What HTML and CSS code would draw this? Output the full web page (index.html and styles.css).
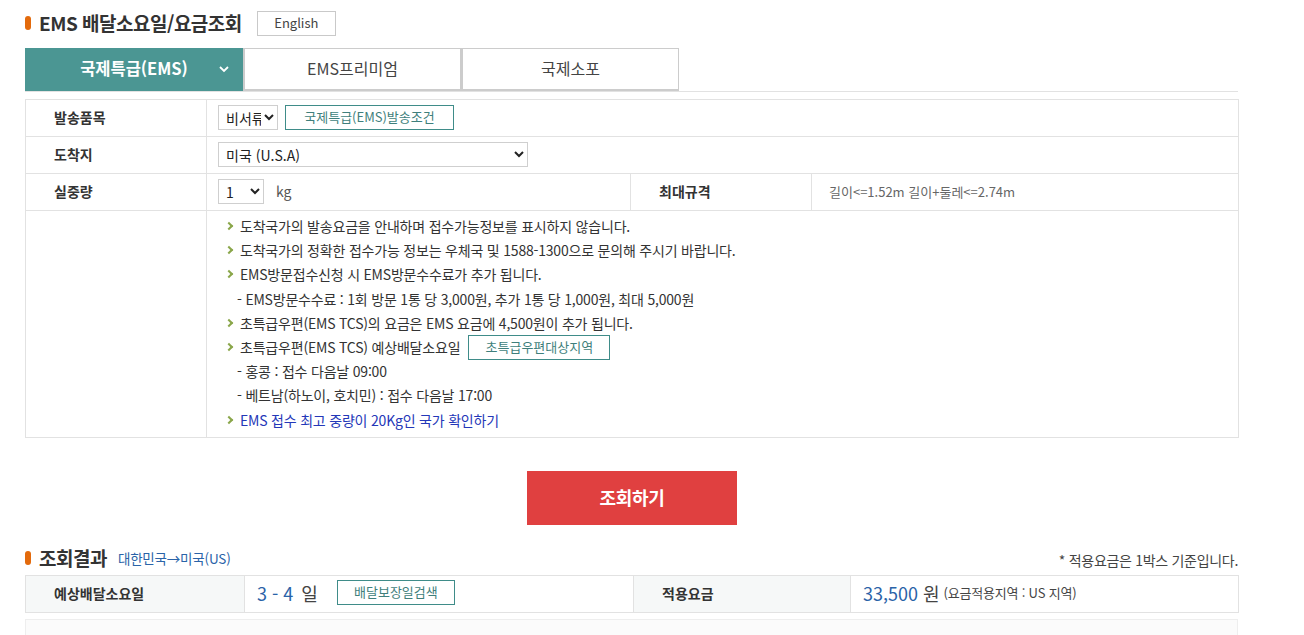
FILE: index.html
```html
<!DOCTYPE html>
<html lang="ko">
<head>
<meta charset="utf-8">
<title>EMS 배달소요일/요금조회</title>
<link rel="stylesheet" href="styles.css">
</head>
<body>
<div class="wrap">
  <div class="head">
    <h2 class="title"><span class="dot"></span>EMS 배달소요일/요금조회</h2>
    <button class="btn-eng">English</button>
  </div>

  <div class="tabs">
    <div class="tab on">국제특급(EMS)
      <svg class="chev" width="12" height="8" viewBox="0 0 12 8"><path d="M2 2 L6 6 L10 2" fill="none" stroke="#fff" stroke-width="1.8"/></svg>
    </div>
    <div class="tab">EMS프리미엄</div>
    <div class="tab">국제소포</div>
  </div>

  <table class="form">
    <colgroup><col class="c1"><col class="c2"><col class="c3"><col class="c4"></colgroup>
    <tr>
      <th>발송품목</th>
      <td colspan="3"><div class="cell">
        <select class="sel sel-kind"><option>비서류</option></select>
        <button class="btn-line">국제특급(EMS)발송조건</button>
      </div></td>
    </tr>
    <tr>
      <th>도착지</th>
      <td colspan="3"><div class="cell">
        <select class="sel sel-dest"><option>미국 (U.S.A)</option></select>
      </div></td>
    </tr>
    <tr>
      <th>실중량</th>
      <td><div class="cell">
        <select class="sel sel-wt"><option>1</option></select>
        <span class="unit">kg</span>
      </div></td>
      <th>최대규격</th>
      <td class="spec">길이&lt;=1.52m 길이+둘레&lt;=2.74m</td>
    </tr>
    <tr>
      <th></th>
      <td colspan="3" class="notes">
        <ul>
          <li class="b">도착국가의 발송요금을 안내하며 접수가능정보를 표시하지 않습니다.</li>
          <li class="b">도착국가의 정확한 접수가능 정보는 우체국 및 1588-1300으로 문의해 주시기 바랍니다.</li>
          <li class="b">EMS방문접수신청 시 EMS방문수수료가 추가 됩니다.</li>
          <li class="d">- EMS방문수수료 : 1회 방문 1통 당 3,000원, 추가 1통 당 1,000원, 최대 5,000원</li>
          <li class="b">초특급우편(EMS TCS)의 요금은 EMS 요금에 4,500원이 추가 됩니다.</li>
          <li class="b">초특급우편(EMS TCS) 예상배달소요일 <button class="btn-line btn-tcs">초특급우편대상지역</button></li>
          <li class="d">- 홍콩 : 접수 다음날 09:00</li>
          <li class="d">- 베트남(하노이, 호치민) : 접수 다음날 17:00</li>
          <li class="b link">EMS 접수 최고 중량이 20Kg인 국가 확인하기</li>
        </ul>
      </td>
    </tr>
  </table>

  <div class="search"><button class="btn-search">조회하기</button></div>

  <div class="rhead">
    <h3 class="title sub"><span class="dot"></span>조회결과<span class="route">대한민국→미국(US)</span></h3>
    <span class="note">* 적용요금은 1박스 기준입니다.</span>
  </div>

  <table class="result">
    <colgroup><col class="r1"><col class="r2"><col class="r3"><col class="r4"></colgroup>
    <tr>
      <th>예상배달소요일</th>
      <td><div class="cell"><span class="big">3 - 4</span><span class="big unit-day">일</span><button class="btn-line btn-guar">배달보장일검색</button></div></td>
      <th>적용요금</th>
      <td><div class="cell"><span class="big">33,500</span><span class="big unit-won">원</span><span class="area">(요금적용지역 : US 지역)</span></div></td>
    </tr>
  </table>
  <div class="more"></div>
</div>
</body>
</html>
```

FILE: styles.css
```css
* { box-sizing: border-box; }
html, body { margin: 0; padding: 0; background: #fff; }
body {
  font-family: "Noto Sans CJK KR", "Noto Sans", sans-serif;
  color: #333;
  font-size: 14px;
}
.wrap { width: 1213px; margin-left: 25px; }

.head { display: flex; align-items: center; height: 48px; padding-bottom: 2px; }
.title {
  margin: 0; display: flex; align-items: center;
  font-size: 19px; font-weight: 700; color: #333; letter-spacing: -0.5px; line-height: 24px;
}
.dot {
  width: 6px; height: 14px; border-radius: 3px; background: #e36a0c;
  margin-right: 8px; display: inline-block;
}
.btn-eng {
  margin-left: 15px; width: 79px; height: 25px; border: 1px solid #c9c9c9; background: #fff;
  font-family: inherit; font-size: 13px; color: #444; padding: 0 0 1px; line-height: 22px;
}

.tabs { display: flex; height: 44px; border-bottom: 1px solid #e2e2e2; }
.tab {
  width: 218px; height: 43px; display: flex; align-items: center; justify-content: center;
  font-size: 16px; color: #444; border: 1px solid #ccc; border-bottom: 2px solid #ccc; background: #fff;
  padding-bottom: 3px;
}
.tab + .tab { border-left: 2px solid #ccc; }
.tab.on {
  background: #4b9693; color: #fff; font-weight: 700; border: none; position: relative;
  letter-spacing: 0; font-size: 16.5px;
}
.tab.on .chev { position: absolute; right: 13px; top: 17px; }

.form, .result { width: 100%; border-collapse: collapse; table-layout: fixed; }
.form { margin-top: 7px; border-top: 1px solid #a4b8b7; }
.form col.c1 { width: 181px; }
.form col.c2 { width: 424px; }
.form col.c3 { width: 181px; }
.form col.c4 { width: 427px; }
.form th, .form td, .result th, .result td {
  border: 1px solid #e2e2e2; height: 37px; padding: 0 0 2px; vertical-align: middle;
}
.form th, .result th {
  text-align: left; padding-left: 28px; font-size: 14px; font-weight: 700; color: #333; background: #fff;
}
.form td .cell { margin-top: 1px; }
.cell { display: flex; align-items: center; padding-left: 11px; }
.sel {
  height: 25px; border: 1px solid #cfcfcf; background: #fff; font-family: inherit;
  font-size: 14px; color: #222; padding: 0 0 0 3px; border-radius: 0;
}
.sel-kind { width: 60px; }
.sel-dest { width: 310px; }
.sel-wt { width: 46px; }
.unit { margin-left: 12px; color: #555; font-size: 14px; margin-bottom: 2px; }
.btn-line {
  height: 25px; border: 1px solid #3f8c89; background: #fff; color: #3f7f7c;
  font-family: inherit; font-size: 13px; padding: 0 0 1px; line-height: 22px;
}
.sel-kind + .btn-line { margin-left: 7px; width: 169px; }
.spec { padding-left: 17px !important; font-size: 13px; color: #666; }

.notes { height: 225px !important; padding: 3px 0 5px 18px !important; vertical-align: top !important; }
.notes ul { list-style: none; margin: 0; padding: 0; }
.notes li { line-height: 24.2px; font-size: 14px; color: #333; letter-spacing: -0.2px; display: flex; align-items: center; height: 24.2px; }
.notes li.b::before {
  content: ""; width: 4px; height: 4px; border-right: 2px solid #8aa64a; border-bottom: 2px solid #8aa64a;
  transform: rotate(-45deg); margin: 0 8px 0 1px; flex: none;
}
.notes li.d { padding-left: 12px; }
.notes li.link { color: #2437b8; }
.btn-tcs { width: 142px; margin-left: 8px; }

.search { display: flex; justify-content: center; margin-top: 33px; padding-left: 1px; }
.btn-search {
  width: 210px; height: 54px; border: none; background: #e04040; color: #fff;
  font-family: inherit; font-size: 18px; font-weight: 700; padding: 0 0 2px; letter-spacing: -0.3px;
}

.rhead { display: flex; align-items: flex-end; justify-content: space-between; margin-top: 21px; height: 29px; padding-bottom: 5px; }
.title.sub { font-size: 19px; }
.route { font-size: 13.5px; font-weight: 400; color: #2a63a8; margin-left: 11px; letter-spacing: -0.2px; }
.note { font-size: 14px; color: #444; padding-bottom: 0; letter-spacing: -0.3px; }

.result { border-top: 1px solid #a4b8b7; }
.result col.r1 { width: 219px; }
.result col.r2 { width: 389px; }
.result col.r3 { width: 217px; }
.result col.r4 { width: 388px; }
.result th { background: #f6f8f8; }
.big { font-size: 18px; color: #2a63a8; }
.result td .cell { padding-left: 12px; }
.unit-day { margin-left: 8px; color: #444; }
.btn-guar { width: 118px; margin-left: 19px; }
.unit-won { margin-left: 5px; color: #444; }
.area { font-size: 13px; color: #444; margin-left: 4px; letter-spacing: -0.2px; }
.more { margin-top: 6px; height: 30px; border: 1px solid #eee; border-bottom: none; background: #fbfbfb; }
```
